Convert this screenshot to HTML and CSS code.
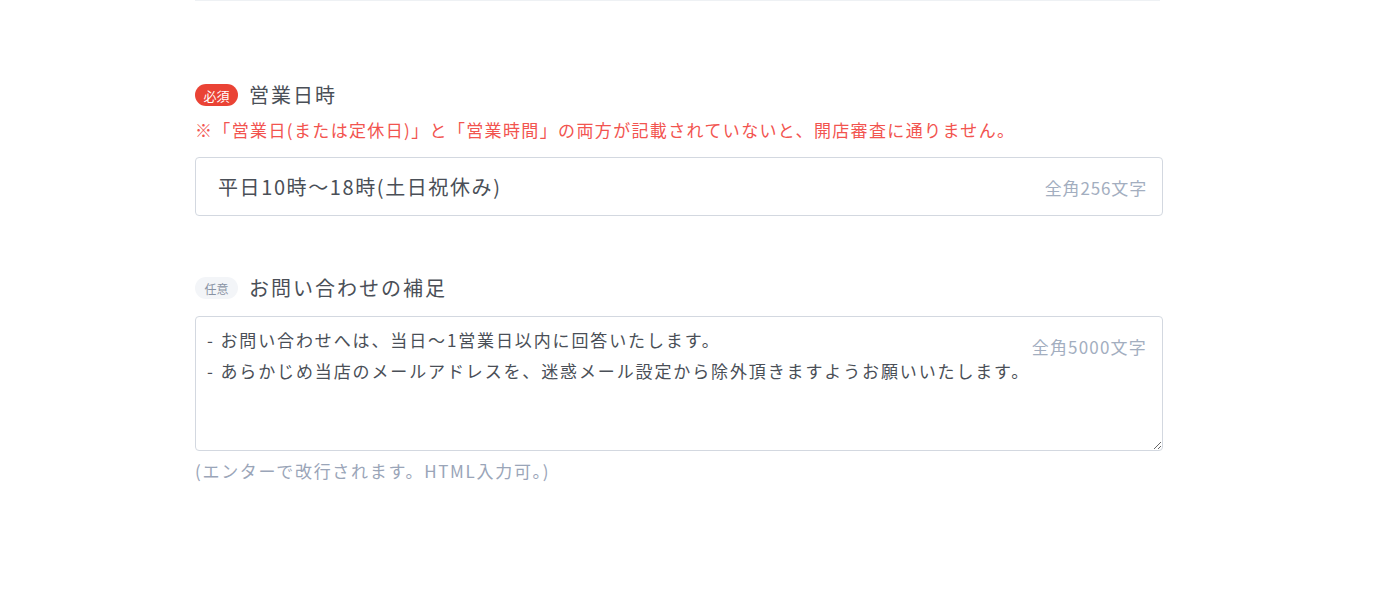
FILE: index.html
```html
<!DOCTYPE html>
<html lang="ja">
<head>
    <meta charset="UTF-8">
    <meta name="viewport" content="width=device-width, initial-scale=1.0">
    <title>ショップ設定</title>
    <link rel="stylesheet" href="styles.css">
</head>
<body>
    <div class="container">
        <div class="divider"></div>

        <div class="field field-hours">
            <div class="field-label">
                <span class="badge badge-required">必須</span>
                <span class="label-text">営業日時</span>
            </div>
            <p class="field-note">※「営業日(または定休日)」と「営業時間」の両方が記載されていないと、開店審査に通りません。</p>
            <div class="input-wrap">
                <input type="text" class="text-input" value="平日10時〜18時(土日祝休み)">
                <span class="counter counter-inline">全角256文字</span>
            </div>
        </div>

        <div class="field field-contact">
            <div class="field-label">
                <span class="badge badge-optional">任意</span>
                <span class="label-text">お問い合わせの補足</span>
            </div>
            <div class="textarea-wrap">
                <textarea class="text-area">- お問い合わせへは、当日〜1営業日以内に回答いたします。
- あらかじめ当店のメールアドレスを、迷惑メール設定から除外頂きますようお願いいたします。</textarea>
                <span class="counter counter-corner">全角5000文字</span>
            </div>
            <p class="field-hint">(エンターで改行されます。HTML入力可。)</p>
        </div>
    </div>
</body>
</html>
```

FILE: styles.css
```css
:root {
    --text-color: #4a4f57;
    --muted-color: #a3aebf;
    --border-color: #d3d8e0;
    --required-color: #ea4335;
    --note-color: #f2544f;
}

* {
    margin: 0;
    padding: 0;
    box-sizing: border-box;
}

body {
    background: #fff;
    color: var(--text-color);
    font-family: "Noto Sans CJK JP", "Noto Sans", sans-serif;
    letter-spacing: 0.05em;
}

.container {
    width: 968px;
    margin-left: 195px;
}

.divider {
    width: 965px;
    height: 1px;
    background: #eef1f4;
}

.field-hours {
    padding-top: 80px;
}

.field-contact {
    padding-top: 58px;
}

.field-label {
    display: flex;
    align-items: center;
    gap: 11px;
    height: 28px;
}

.badge {
    display: inline-flex;
    align-items: center;
    justify-content: center;
    width: 43px;
    height: 22px;
    border-radius: 11px;
    font-size: 12px;
    letter-spacing: 0;
}

.badge-required {
    background: var(--required-color);
    color: #fff;
    font-size: 13px;
}

.badge-optional {
    background: #f3f5f8;
    color: #8993a4;
}

.label-text {
    font-size: 20px;
    line-height: 28px;
    letter-spacing: 0.1em;
}

.field-note {
    margin-top: 9px;
    font-size: 17px;
    line-height: 24px;
    letter-spacing: 0.08em;
    color: var(--note-color);
}

.input-wrap {
    position: relative;
    margin-top: 15px;
}

.text-input {
    width: 100%;
    height: 59px;
    padding: 0 130px 0 22px;
    border: 1px solid var(--border-color);
    border-radius: 4px;
    font-family: inherit;
    font-size: 20px;
    letter-spacing: 0.08em;
    color: var(--text-color);
    background: #fff;
    outline: none;
}

.counter {
    position: absolute;
    right: 16px;
    font-size: 17px;
    letter-spacing: 0.05em;
    color: var(--muted-color);
    pointer-events: none;
}

.counter-inline {
    top: 50%;
    transform: translateY(-50%);
}

.counter-corner {
    top: 18px;
    letter-spacing: 0.07em;
}

.textarea-wrap {
    position: relative;
    margin-top: 14px;
}

.text-area {
    display: block;
    width: 100%;
    height: 135px;
    padding: 7px 100px 7px 11px;
    border: 1px solid var(--border-color);
    border-radius: 4px;
    font-family: inherit;
    font-size: 17px;
    line-height: 31px;
    letter-spacing: 0.11em;
    color: var(--text-color);
    resize: vertical;
    outline: none;
}

.field-hint {
    margin-top: 8px;
    font-size: 17px;
    line-height: 24px;
    letter-spacing: 0.1em;
    color: #9aa5b8;
}
```
